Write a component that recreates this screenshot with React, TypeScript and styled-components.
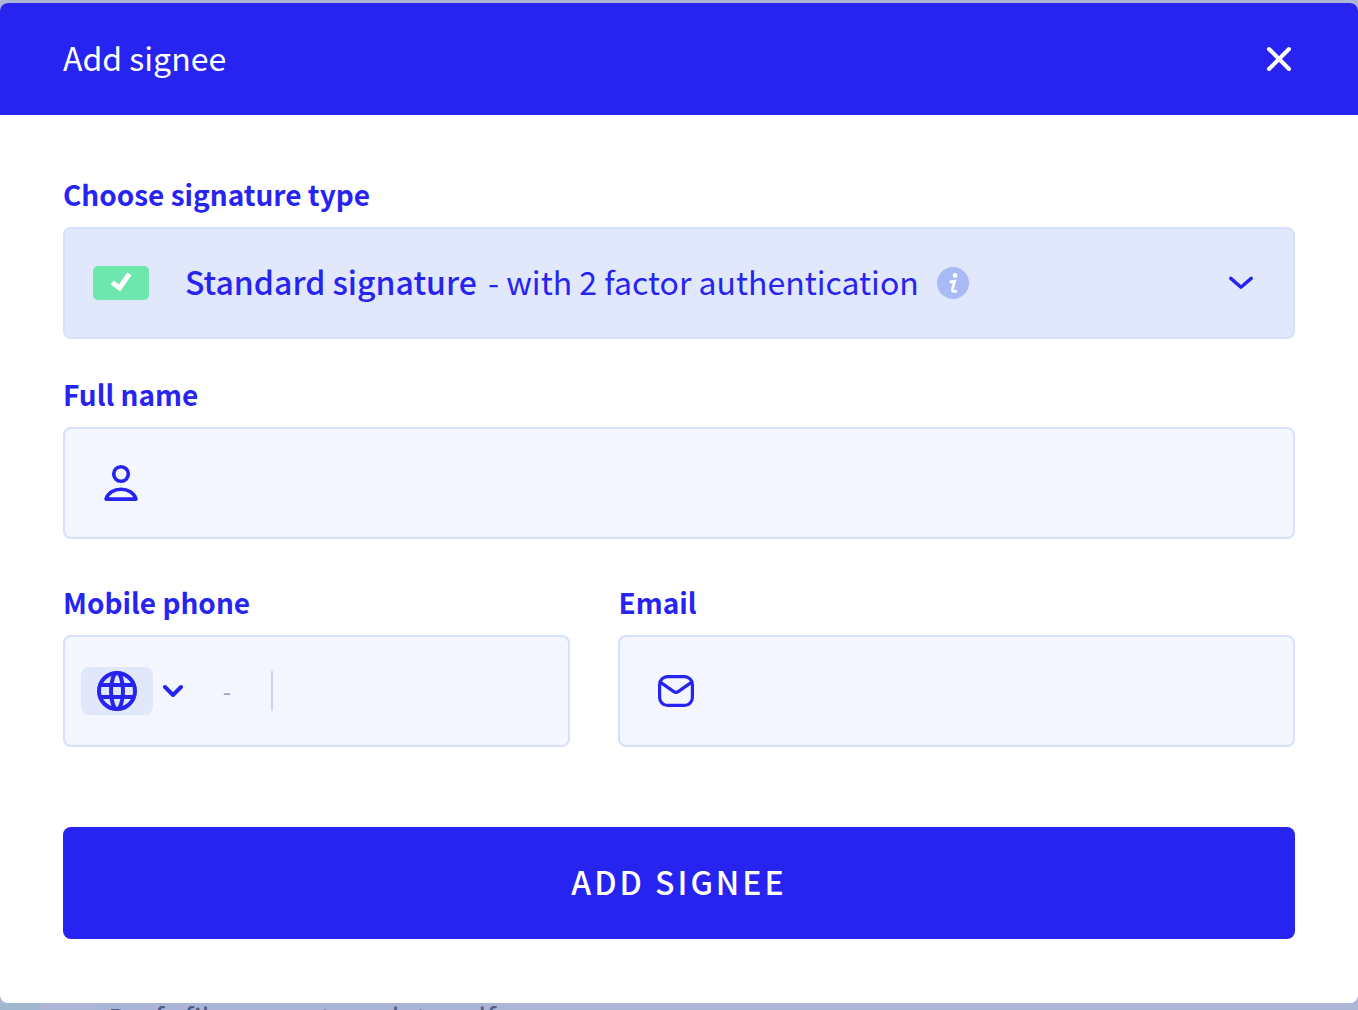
import React from "react";
import styled, { createGlobalStyle } from "styled-components";

const blue = "#2724f1";

const GlobalStyle = createGlobalStyle`
  *, *::before, *::after { box-sizing: border-box; }
  body {
    margin: 0;
    background: #aeb6d7;
    font-family: "Noto Sans CJK SC", "Noto Sans", sans-serif;
    color: ${blue};
  }
  button, input, select { font: inherit; color: inherit; }
`;

const Page = styled.div`
  display: flex;
  flex-direction: column;
  height: 100vh;
  overflow: hidden;
  padding-top: 3px;
`;

const Dialog = styled.section`
  flex: none;
  background: #fff;
  border-radius: 8px;
  overflow: hidden;
`;

const Header = styled.header`
  display: flex;
  align-items: center;
  justify-content: space-between;
  height: 112px;
  padding: 0 63px;
  background: ${blue};
  color: #fff;
`;

const Title = styled.h1`
  margin: 0;
  padding-bottom: 4px;
  font-size: 32px;
  font-weight: 400;
  line-height: 48px;
`;

const CloseButton = styled.button`
  display: grid;
  place-items: center;
  width: 32px;
  height: 32px;
  padding: 0;
  border: 0;
  background: none;
  cursor: pointer;
`;

const Form = styled.form`
  display: flex;
  flex-direction: column;
  padding: 60px 63px 64px;
`;

const Field = styled.div<{ $gap?: number }>`
  display: flex;
  flex-direction: column;
  gap: 14px;
  min-width: 0;
  margin-top: ${(p) => p.$gap ?? 0}px;
`;

const Label = styled.label`
  font-size: 28px;
  font-weight: 600;
  line-height: 38px;
`;

const Columns = styled.div`
  display: grid;
  grid-template-columns: 3fr 4fr;
  gap: 48px;
  margin-top: 44px;
`;

const Control = styled.div<{ $filled?: boolean; $inset?: number }>`
  position: relative;
  display: flex;
  align-items: center;
  height: 112px;
  padding: 0 ${(p) => p.$inset ?? 28}px;
  border: 2px solid #d6dffc;
  border-radius: 8px;
  background: ${(p) => (p.$filled ? "#e1e8fc" : "#f4f7ff")};
  &:focus-within { border-color: #a9b9f7; }
`;

const Tick = styled.span`
  display: grid;
  place-items: center;
  width: 56px;
  height: 34px;
  border-radius: 5px;
  background: #6ee7ae;
`;

const Choice = styled.span`
  margin-left: 36px;
  padding-bottom: 4px;
  font-size: 32px;
  line-height: 48px;
  white-space: nowrap;
`;

const Strong = styled.strong`
  margin-right: 4px;
  font-weight: 500;
`;

const Info = styled.span`
  display: grid;
  margin-left: 18px;
`;

const Trailing = styled.span`
  display: grid;
  margin-left: auto;
  margin-right: 12px;
`;

const CoverSelect = styled.select`
  position: absolute;
  inset: 0;
  width: 100%;
  height: 100%;
  opacity: 0;
  cursor: pointer;
`;

const LeadIcon = styled.span`
  display: grid;
  place-items: center;
  flex: none;
  width: 56px;
`;

const TextInput = styled.input`
  flex: 1;
  min-width: 0;
  height: 100%;
  padding: 0;
  margin-left: 36px;
  border: 0;
  outline: 0;
  background: none;
  font-size: 32px;
`;

const Country = styled.div`
  position: relative;
  display: flex;
  align-items: center;
  gap: 10px;
`;

const Flag = styled.span`
  display: grid;
  place-items: center;
  width: 72px;
  height: 48px;
  border-radius: 8px;
  background: #e1e8fc;
`;

const DialCode = styled.span`
  width: 88px;
  text-align: center;
  font-size: 24px;
  line-height: 40px;
  color: #98a2c4;
`;

const Divider = styled.span`
  width: 2px;
  height: 40px;
  background: #ccd5ec;
`;

const PhoneInput = styled(TextInput)`
  margin-left: 20px;
`;

const Submit = styled.button`
  height: 112px;
  margin-top: 80px;
  padding: 0 0 4px;
  border: 0;
  border-radius: 8px;
  background: ${blue};
  color: #fff;
  font-size: 32px;
  font-weight: 500;
  letter-spacing: 3px;
  text-transform: uppercase;
  cursor: pointer;
`;

const Behind = styled.div`
  display: flex;
  flex: 1 0 0;
  min-height: 0;
  overflow: hidden;
  background: linear-gradient(90deg, #9fb8d0 40px, #aeb6d7 40px, #aeb6d7 90px, #a9b4d8 100px, #a9b4d8 480px, #aeb6d7 520px);
`;

const BehindText = styled.p`
  margin: 0 0 0 108px;
  font-size: 29px;
  line-height: 28px;
  white-space: nowrap;
  color: #525d85;
`;

export default function App() {
  return (
    <>
      <GlobalStyle />
      <Page>
        <Dialog role="dialog" aria-labelledby="title">
          <Header>
            <Title id="title">Add signee</Title>
            <CloseButton type="button" aria-label="Close">
              <svg width="32" height="32" viewBox="0 0 32 32" fill="none" stroke="#fff" strokeWidth="4" strokeLinecap="round">
                <path d="M6 6 26 26M26 6 6 26" />
              </svg>
            </CloseButton>
          </Header>
          <Form onSubmit={(e) => e.preventDefault()}>
            <Field>
              <Label htmlFor="type">Choose signature type</Label>
              <Control $filled>
                <Tick>
                  <svg width="56" height="34" viewBox="0 0 56 34" fill="none" stroke="#fff" strokeWidth="5">
                    <path d="M19.3 16.6 26.6 21.9 36.3 7.8" />
                  </svg>
                </Tick>
                <Choice>
                  <Strong>Standard signature</Strong> - with 2 factor authentication
                </Choice>
                <Info>
                  <svg width="32" height="32" viewBox="0 0 32 32">
                    <circle cx="16" cy="16" r="16" fill="#a9baf7" />
                    <circle cx="18" cy="8.4" r="2.3" fill="#fff" />
                    <path d="M12.8 15.2Q14.8 14.6 17.6 14.2L15.4 22.6Q15 25 19.8 24.2" fill="none" stroke="#fff" strokeWidth="2.8" />
                  </svg>
                </Info>
                <Trailing>
                  <svg width="24" height="14" viewBox="0 0 24 14" fill="none" stroke={blue} strokeWidth="3.4" strokeLinecap="round" strokeLinejoin="round">
                    <path d="M1.8 2.4 12 11.2 22.2 2.4" />
                  </svg>
                </Trailing>
                <CoverSelect id="type">
                  <option>Standard signature - with 2 factor authentication</option>
                </CoverSelect>
              </Control>
            </Field>
            <Field $gap={36}>
              <Label htmlFor="name">Full name</Label>
              <Control>
                <LeadIcon>
                  <svg width="36" height="38" viewBox="0 0 36 38" fill="none" stroke={blue} strokeWidth="3.6" strokeLinejoin="round">
                    <circle cx="18" cy="10" r="7.3" />
                    <path d="M3 35.1C5 29 11 25.2 18 25.2S31 29 33 35.1Z" />
                  </svg>
                </LeadIcon>
                <TextInput id="name" type="text" />
              </Control>
            </Field>
            <Columns>
              <Field>
                <Label htmlFor="phone">Mobile phone</Label>
                <Control $inset={16}>
                  <Country>
                    <Flag>
                      <svg width="40" height="40" viewBox="0 0 40 40" fill="none" stroke={blue} strokeWidth="4">
                        <circle cx="20" cy="20" r="18" />
                        <ellipse cx="20" cy="20" rx="6" ry="18" />
                        <path d="M3 14H37M3 26H37" />
                      </svg>
                    </Flag>
                    <svg width="20" height="14" viewBox="0 0 20 14" fill="none" stroke={blue} strokeWidth="4" strokeLinecap="round" strokeLinejoin="round">
                      <path d="M2 3 10 11 18 3" />
                    </svg>
                    <CoverSelect aria-label="Country code">
                      <option>-</option>
                    </CoverSelect>
                  </Country>
                  <DialCode>-</DialCode>
                  <Divider />
                  <PhoneInput id="phone" type="tel" />
                </Control>
              </Field>
              <Field>
                <Label htmlFor="email">Email</Label>
                <Control>
                  <LeadIcon>
                    <svg width="36" height="32" viewBox="0 0 36 32" fill="none" stroke={blue} strokeWidth="3.2" strokeLinejoin="round">
                      <rect x="1.6" y="1.6" width="32.8" height="28.8" rx="8" />
                      <path d="M2.6 7.4 15.5 16.4Q18 18.2 20.5 16.4L33.4 7.4" />
                    </svg>
                  </LeadIcon>
                  <TextInput id="email" type="email" />
                </Control>
              </Field>
            </Columns>
            <Submit type="submit">Add signee</Submit>
          </Form>
        </Dialog>
        <Behind>
          <BehindText>Drafs file user a template self</BehindText>
        </Behind>
      </Page>
    </>
  );
}
